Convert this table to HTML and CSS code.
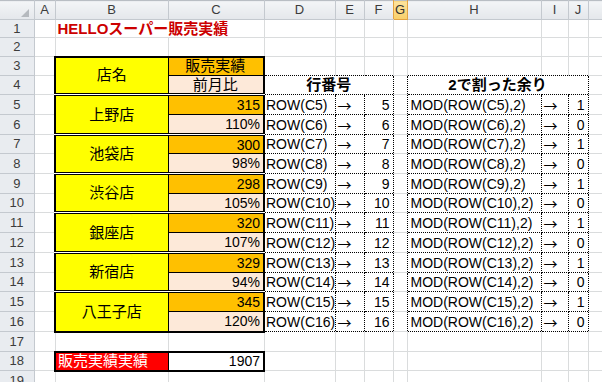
FILE: index.html
```html
<html>

<head>
  <link rel="stylesheet" href="styles.css">
  <title>HELLOスーパー販売実績</title>
</head>

<body>
  <table class="sheet">
    <colgroup>
      <col class="c-hd"><col class="c-a"><col class="c-b"><col class="c-c"><col class="c-d"><col class="c-e">
      <col class="c-f"><col class="c-g"><col class="c-h"><col class="c-i"><col class="c-j"><col class="c-k">
    </colgroup>

    <tr class="h19 cols">
      <th class="corner"><svg width="34" height="18" viewBox="0 0 34 18"><polygon points="21,16 29,16 29,8" fill="#b5b9be"/></svg></th>
      <th>A</th><th>B</th><th>C</th><th>D</th><th>E</th><th class="pre-sel">F</th>
      <th class="sel">G</th><th>H</th><th>I</th><th>J</th><th></th>
    </tr>

    <tr class="h18">
      <th>1</th><td></td>
      <td class="title jp" colspan="2">HELLOスーパー販売実績</td>
      <td></td><td></td><td></td><td></td><td></td><td></td><td></td><td></td>
    </tr>
    <tr class="h19">
      <th>2</th><td></td><td></td><td></td><td></td><td></td><td></td><td></td><td></td><td></td><td></td><td></td>
    </tr>
    <tr class="h19">
      <th>3</th><td></td>
      <td class="name top jp" rowspan="2">店名</td>
      <td class="sales top center jp">販売実績</td>
      <td class="nb"></td><td class="nb"></td><td class="nb"></td>
      <td></td>
      <td class="nb"></td><td class="nb"></td><td class="nb"></td>
      <td></td>
    </tr>
    <tr class="h19">
      <th>4</th><td></td>
      <td class="ratio center jp">前月比</td>
      <td class="dot head jp" colspan="3">行番号</td>
      <td class="gap"></td>
      <td class="dot head jp" colspan="3">2で割った余り</td>
      <td></td>
    </tr>

    <!-- 上野店 -->
    <tr class="h20">
      <th>5</th><td></td>
      <td class="name jp" rowspan="2">上野店</td>
      <td class="sales">315</td>
      <td class="dot fx">ROW(C5)</td><td class="dot arrow">→</td><td class="dot num">5</td>
      <td class="gap"></td>
      <td class="dot mod">MOD(ROW(C5),2)</td><td class="dot arrow">→</td><td class="dot num">1</td>
      <td></td>
    </tr>
    <tr class="h20">
      <th>6</th><td></td>
      <td class="ratio">110%</td>
      <td class="dot fx">ROW(C6)</td><td class="dot arrow">→</td><td class="dot num">6</td>
      <td class="gap"></td>
      <td class="dot mod">MOD(ROW(C6),2)</td><td class="dot arrow">→</td><td class="dot num">0</td>
      <td></td>
    </tr>

    <!-- 池袋店 -->
    <tr class="h19">
      <th>7</th><td></td>
      <td class="name jp" rowspan="2">池袋店</td>
      <td class="sales">300</td>
      <td class="dot fx">ROW(C7)</td><td class="dot arrow">→</td><td class="dot num">7</td>
      <td class="gap"></td>
      <td class="dot mod">MOD(ROW(C7),2)</td><td class="dot arrow">→</td><td class="dot num">1</td>
      <td></td>
    </tr>
    <tr class="h20">
      <th>8</th><td></td>
      <td class="ratio">98%</td>
      <td class="dot fx">ROW(C8)</td><td class="dot arrow">→</td><td class="dot num">8</td>
      <td class="gap"></td>
      <td class="dot mod">MOD(ROW(C8),2)</td><td class="dot arrow">→</td><td class="dot num">0</td>
      <td></td>
    </tr>

    <!-- 渋谷店 -->
    <tr class="h20">
      <th>9</th><td></td>
      <td class="name jp" rowspan="2">渋谷店</td>
      <td class="sales">298</td>
      <td class="dot fx">ROW(C9)</td><td class="dot arrow">→</td><td class="dot num">9</td>
      <td class="gap"></td>
      <td class="dot mod">MOD(ROW(C9),2)</td><td class="dot arrow">→</td><td class="dot num">1</td>
      <td></td>
    </tr>
    <tr class="h19">
      <th>10</th><td></td>
      <td class="ratio">105%</td>
      <td class="dot fx">ROW(C10)</td><td class="dot arrow">→</td><td class="dot num">10</td>
      <td class="gap"></td>
      <td class="dot mod">MOD(ROW(C10),2)</td><td class="dot arrow">→</td><td class="dot num">0</td>
      <td></td>
    </tr>

    <!-- 銀座店 -->
    <tr class="h20">
      <th>11</th><td></td>
      <td class="name jp" rowspan="2">銀座店</td>
      <td class="sales">320</td>
      <td class="dot fx">ROW(C11)</td><td class="dot arrow">→</td><td class="dot num">11</td>
      <td class="gap"></td>
      <td class="dot mod">MOD(ROW(C11),2)</td><td class="dot arrow">→</td><td class="dot num">1</td>
      <td></td>
    </tr>
    <tr class="h20">
      <th>12</th><td></td>
      <td class="ratio">107%</td>
      <td class="dot fx">ROW(C12)</td><td class="dot arrow">→</td><td class="dot num">12</td>
      <td class="gap"></td>
      <td class="dot mod">MOD(ROW(C12),2)</td><td class="dot arrow">→</td><td class="dot num">0</td>
      <td></td>
    </tr>

    <!-- 新宿店 -->
    <tr class="h20">
      <th>13</th><td></td>
      <td class="name jp" rowspan="2">新宿店</td>
      <td class="sales">329</td>
      <td class="dot fx">ROW(C13)</td><td class="dot arrow">→</td><td class="dot num">13</td>
      <td class="gap"></td>
      <td class="dot mod">MOD(ROW(C13),2)</td><td class="dot arrow">→</td><td class="dot num">1</td>
      <td></td>
    </tr>
    <tr class="h19">
      <th>14</th><td></td>
      <td class="ratio">94%</td>
      <td class="dot fx">ROW(C14)</td><td class="dot arrow">→</td><td class="dot num">14</td>
      <td class="gap"></td>
      <td class="dot mod">MOD(ROW(C14),2)</td><td class="dot arrow">→</td><td class="dot num">0</td>
      <td></td>
    </tr>

    <!-- 八王子店 -->
    <tr class="h20">
      <th>15</th><td></td>
      <td class="name last jp" rowspan="2">八王子店</td>
      <td class="sales">345</td>
      <td class="dot fx">ROW(C15)</td><td class="dot arrow">→</td><td class="dot num">15</td>
      <td class="gap"></td>
      <td class="dot mod">MOD(ROW(C15),2)</td><td class="dot arrow">→</td><td class="dot num">1</td>
      <td></td>
    </tr>
    <tr class="h20">
      <th>16</th><td></td>
      <td class="ratio last">120%</td>
      <td class="dot fx">ROW(C16)</td><td class="dot arrow">→</td><td class="dot num">16</td>
      <td class="gap"></td>
      <td class="dot mod">MOD(ROW(C16),2)</td><td class="dot arrow">→</td><td class="dot num">0</td>
      <td></td>
    </tr>

    <tr class="h20">
      <th>17</th><td></td><td></td><td></td><td></td><td></td><td></td><td></td><td></td><td></td><td></td><td></td>
    </tr>
    <tr class="h19">
      <th>18</th><td></td>
      <td class="total-label jp">販売実績実績</td>
      <td class="total">1907</td>
      <td></td><td></td><td></td><td></td><td></td><td></td><td></td><td></td>
    </tr>
    <tr class="h20">
      <th>19</th><td></td><td></td><td></td><td></td><td></td><td></td><td></td><td></td><td></td><td></td><td></td>
    </tr>
  </table>
</body>

</html>
```

FILE: styles.css
```css
body {
  margin: 0;
  background: #fff;
}

.sheet {
  border-collapse: collapse;
  table-layout: fixed;
  width: 602px;
  font-family: "Liberation Sans", "Noto Sans CJK JP", sans-serif;
  font-size: 14px;
  color: #000;
}

.c-hd { width: 34px; }
.c-a { width: 21px; }
.c-b { width: 113px; }
.c-c { width: 96px; }
.c-d { width: 71px; }
.c-e { width: 29px; }
.c-f { width: 29px; }
.c-g { width: 14px; }
.c-h { width: 134px; }
.c-i { width: 27px; }
.c-j { width: 20px; }
.c-k { width: 14px; }

tr.h18 { height: 18px; }
tr.h19 { height: 19px; }
tr.h20 { height: 20px; }

/* row / column headings */
.sheet th {
  padding: 0;
  font-weight: normal;
  font-size: 13px;
  color: #3c3c3c;
  background: #e9ecf0;
  border-right: 1px solid #c4c9cf;
  border-bottom: 1px solid #c4c9cf;
  text-align: center;
  line-height: 16px;
}

.cols th {
  border-top: 1px solid #b9bec4;
  background: linear-gradient(#f3f5f7, #e4e7eb);
}

.corner svg {
  display: block;
}

.cols th.pre-sel {
  border-right-color: #e3a342;
}

.cols th.sel {
  background: linear-gradient(#fde39c, #f8cf6a);
  border-right-color: #e3a342;
  border-bottom-color: #e3a342;
  color: #333;
}

/* plain cells */
.sheet td {
  padding: 0 2px;
  border-right: 1px solid #dadcdd;
  border-bottom: 1px solid #dadcdd;
  white-space: nowrap;
  overflow: hidden;
  line-height: 16px;
}

.jp {
  font-size: 15px;
}

.title {
  color: #cc0000;
  font-weight: bold;
}

/* store table */
.sheet td.top {
  border-top: 2px solid #000;
}

.sheet td.name {
  background: #ffff00;
  text-align: center;
  border-left: 2px solid #000;
  border-right: 1px solid #000;
  border-bottom: 3px double #000;
}

.sheet td.sales {
  background: #ffc000;
  text-align: right;
  padding-right: 3px;
  border-right: 2px solid #000;
  border-bottom: 1px solid #000;
}

.sheet td.ratio {
  background: #fde9d9;
  text-align: right;
  padding-right: 3px;
  border-right: 2px solid #000;
  border-bottom: 3px double #000;
}

.sheet td.center {
  text-align: center;
}

.sheet td.last {
  border-bottom: 2px solid #000;
}

/* dotted helper boxes */
.sheet td.dot {
  border: 1px dotted #000;
}

.sheet td.nb {
  border-bottom: none;
}

.sheet td.gap {
  border-right: none;
}

.sheet td.head {
  font-weight: bold;
  text-align: center;
}

.sheet td.fx {
  padding-left: 1px;
}

.sheet td.mod {
  padding-left: 3px;
}

.sheet td.arrow {
  padding-left: 2px;
  font-family: "Noto Sans CJK JP", sans-serif;
}

.sheet td.num {
  text-align: right;
  padding-right: 3px;
}

/* total row */
.sheet td.total-label {
  background: #ff0000;
  color: #fff;
  border: 2px solid #000;
  border-right: 1px solid #000;
}

.sheet td.total {
  text-align: right;
  padding-right: 3px;
  border: 2px solid #000;
  border-left: 1px solid #000;
}
```
